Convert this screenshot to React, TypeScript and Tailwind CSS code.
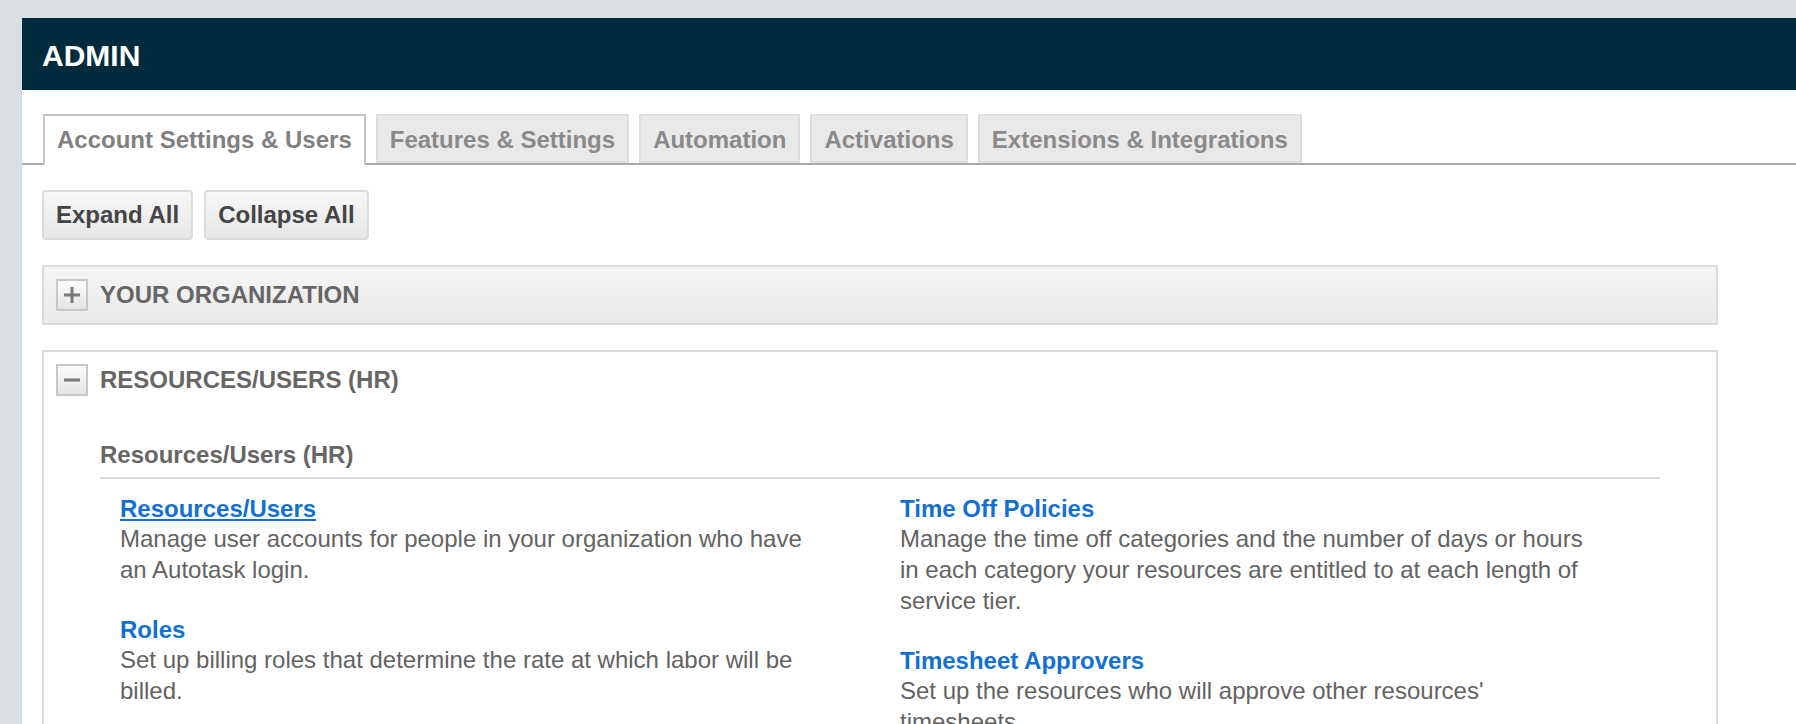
import React from 'react';

const tabs = [
  'Account Settings & Users',
  'Features & Settings',
  'Automation',
  'Activations',
  'Extensions & Integrations',
];

const leftItems = [
  {
    title: 'Resources/Users',
    desc: 'Manage user accounts for people in your organization who have an Autotask login.',
    underline: true,
  },
  {
    title: 'Roles',
    desc: 'Set up billing roles that determine the rate at which labor will be billed.',
  },
  {
    title: 'Departments',
    desc: 'Set up departments and assign resources and their roles to each department.',
  },
];

const rightItems = [
  {
    title: 'Time Off Policies',
    desc: 'Manage the time off categories and the number of days or hours in each category your resources are entitled to at each length of service tier.',
  },
  {
    title: 'Timesheet Approvers',
    desc: "Set up the resources who will approve other resources' timesheets.",
  },
];

const ToggleBox = ({ open }: { open: boolean }) => (
  <span className="flex h-[32px] w-[32px] shrink-0 items-center justify-center border-2 border-[#c8c8c8] bg-linear-to-b from-[#fbfbfb] to-[#e4e4e4]">
    <svg width="18" height="18" viewBox="0 0 18 18">
      <rect x="1" y="7.5" width="16" height="3" fill="#7a7a7a" />
      {!open && <rect x="7.5" y="1" width="3" height="16" fill="#7a7a7a" />}
    </svg>
  </span>
);

const Item = ({ title, desc, underline }: { title: string; desc: string; underline?: boolean }) => (
  <div className="mb-[31px] w-[700px]">
    <a
      href="#"
      className={`block text-[24px] font-bold leading-[28px] text-[#1270d2] ${
        underline ? 'underline decoration-2 underline-offset-[2px]' : 'no-underline'
      }`}
    >
      {title}
    </a>
    <p className="text-[24px] leading-[31px] text-[#636363]">{desc}</p>
  </div>
);

export default function App() {
  return (
    <div className="min-h-screen bg-[#dadfe3] pl-[22px] pt-[18px] font-['Liberation_Sans',Arial,sans-serif]">
      <div className="min-h-[706px] bg-white">
        {/* header */}
        <header className="flex h-[72px] items-center bg-[#002b3c] pl-5 pt-[3px]">
          <h1 className="text-[30px] font-bold leading-none text-white">ADMIN</h1>
        </header>

        {/* tabs */}
        <div className="mt-[24px] flex items-end gap-[10px] border-b-2 border-[#aaaaaa] pl-[21px]">
          {tabs.map((t, i) =>
            i === 0 ? (
              <div
                key={t}
                className="relative mb-[-2px] flex h-[51px] items-center border-2 border-b-0 border-[#c6c6c6] bg-white px-3 pb-[2px] text-[24px] font-bold leading-[30px] text-[#808080]"
              >
                {t}
              </div>
            ) : (
              <div
                key={t}
                className="flex h-[49px] items-center border-2 border-[#dedede] bg-[#e9e9e9] px-3 pt-[2px] text-[24px] font-bold leading-[30px] text-[#8a8a8a]"
              >
                {t}
              </div>
            )
          )}
        </div>

        {/* buttons */}
        <div className="flex gap-[11px] pl-5 pt-[25px]">
          {['Expand All', 'Collapse All'].map((b) => (
            <button
              key={b}
              className="flex h-[50px] items-center rounded-[4px] border-2 border-[#dcdcdc] bg-linear-to-b from-[#f8f8f8] to-[#e6e6e6] px-3 text-[24px] font-bold leading-[30px] text-[#444444]"
            >
              {b}
            </button>
          ))}
        </div>

        {/* your organization */}
        <div className="ml-5 mt-[25px] flex w-[1676px] items-center gap-3 border-2 border-[#dcdcdc] bg-linear-to-b from-[#f6f6f6] to-[#e9e9e9] p-3">
          <ToggleBox open={false} />
          <span className="text-[24px] font-bold leading-[32px] text-[#666666]">YOUR ORGANIZATION</span>
        </div>

        {/* resources / users */}
        <div className="ml-5 mt-[25px] w-[1676px] border-2 border-[#dcdcdc] bg-white">
          <div className="flex items-center gap-3 p-3">
            <ToggleBox open={true} />
            <span className="text-[24px] font-bold leading-[32px] text-[#666666]">RESOURCES/USERS (HR)</span>
          </div>
          <div className="px-[56px] pt-[32px]">
            <h3 className="border-b-2 border-[#dddddd] pb-[7px] text-[24px] font-bold leading-[30px] text-[#666666]">
              Resources/Users (HR)
            </h3>
            <div className="grid grid-cols-[780px_780px] pl-5 pt-4">
              <div className="flex flex-col">
                {leftItems.map((it) => (
                  <Item key={it.title} {...it} />
                ))}
              </div>
              <div className="flex flex-col">
                {rightItems.map((it) => (
                  <Item key={it.title} {...it} />
                ))}
              </div>
            </div>
          </div>
        </div>
      </div>
    </div>
  );
}
